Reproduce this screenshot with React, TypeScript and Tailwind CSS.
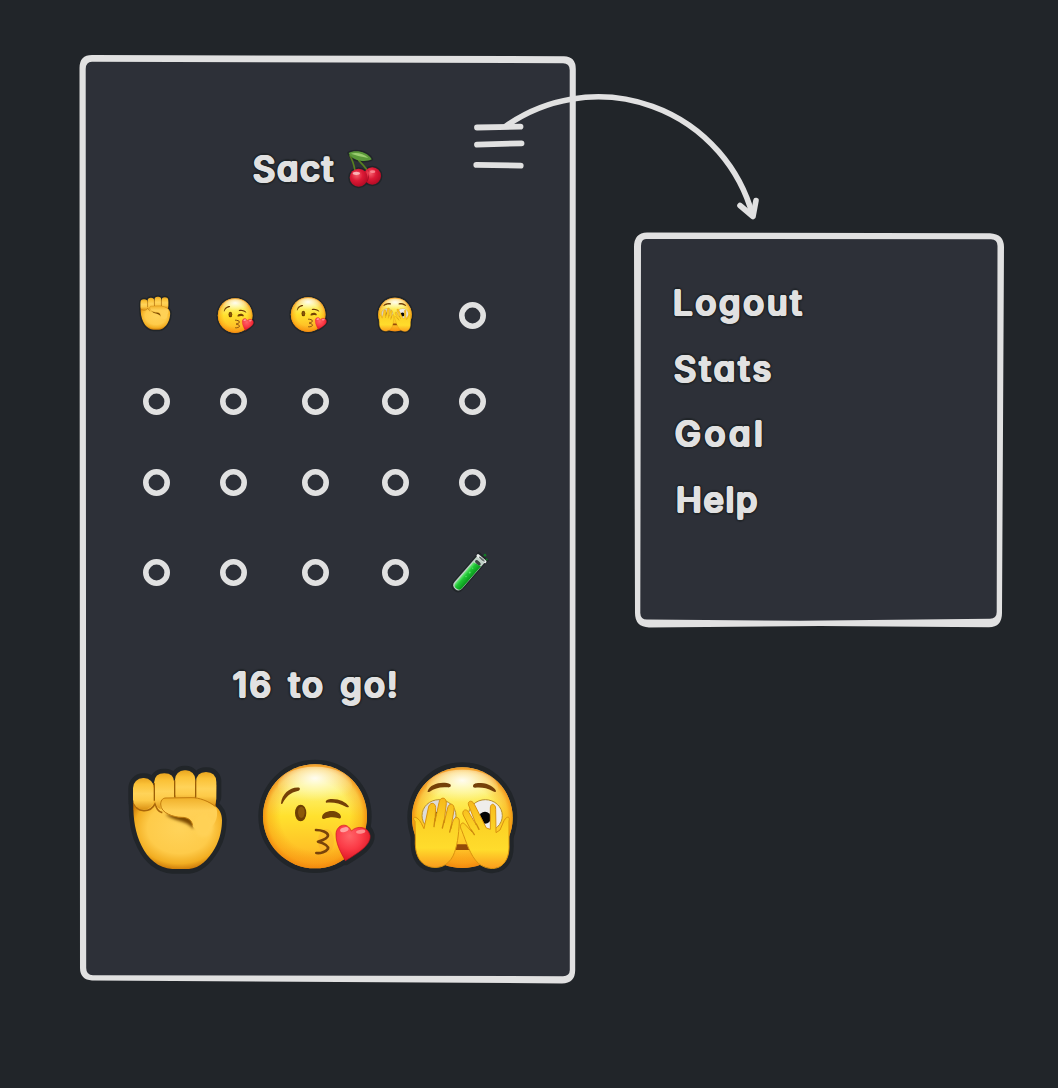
import React from "react";

const HALO = "#212529";
const CHALK = "#e1e1e1";

type SvgProps = { className?: string };

function Label({ children, className = "" }: { children: React.ReactNode; className?: string }) {
  return (
    <span
      className={
        "block whitespace-nowrap font-['Inter',sans-serif] text-[34.5px] leading-10 font-normal text-[#e1e1e1] [font-feature-settings:'cv11'] [text-shadow:1.4px_0_0_#e1e1e1,-1.4px_0_0_#e1e1e1,0_1.4px_0_#e1e1e1,0_-1.4px_0_#e1e1e1,1px_1px_0_#e1e1e1,-1px_1px_0_#e1e1e1,1px_-1px_0_#e1e1e1,-1px_-1px_0_#e1e1e1,3px_0_1px_#212529,-3px_0_1px_#212529,0_3px_1px_#212529,0_-3px_1px_#212529,2px_2px_1px_#212529,-2px_2px_1px_#212529,2px_-2px_1px_#212529,-2px_-2px_1px_#212529] " +
        className
      }
    >
      {children}
    </span>
  );
}

function Ring() {
  return (
    <svg className="size-[27px]" viewBox="0 0 27 27" fill="none">
      <circle cx="13.5" cy="13.5" r="10.7" stroke={CHALK} strokeWidth="5.6" />
    </svg>
  );
}

function Fist({ className }: SvgProps) {
  const palm =
    "M55 160 C54 205 61 252 80 288 C98 325 130 355 172 357 L222 357 C255 355 280 328 300 294 C316 266 321 235 321 210 C321 190 312 176 298 166 L240 146 L140 150 Z";
  return (
    <svg className={className} viewBox="0 0 405 405">
      <defs>
        <radialGradient id="palm" cx="0.52" cy="0.42" r="0.6">
          <stop offset="0" stopColor="#ffd35a" />
          <stop offset="0.6" stopColor="#fecb4a" />
          <stop offset="0.84" stopColor="#f2ae22" />
          <stop offset="1" stopColor="#c87406" />
        </radialGradient>
        <linearGradient id="finger" x1="0" x2="0" y1="0" y2="1">
          <stop offset="0" stopColor="#e9a51f" />
          <stop offset="0.2" stopColor="#fbc238" />
          <stop offset="0.5" stopColor="#ffd359" />
          <stop offset="0.72" stopColor="#fdca48" />
          <stop offset="1" stopColor="#dd9416" />
        </linearGradient>
        <linearGradient id="thumb" x1="0" x2="0" y1="0" y2="1">
          <stop offset="0" stopColor="#f0b02a" />
          <stop offset="0.4" stopColor="#ffd056" />
          <stop offset="1" stopColor="#ffcf52" />
        </linearGradient>
        <filter id="soft"><feGaussianBlur stdDeviation="4" /></filter>
      </defs>
      <g fill={HALO} stroke={HALO} strokeWidth="28" strokeLinejoin="round">
        <path d={palm} />
        <rect x="54" y="84" width="64" height="96" rx="30" />
        <rect x="117" y="70" width="62" height="100" rx="28" />
        <rect x="180" y="61" width="60" height="100" rx="28" />
        <rect x="243" y="66" width="62" height="100" rx="28" />
      </g>
      <path d="M56 118 L118 104 L180 95 L243 95 L304 104 L302 180 L56 180 Z" fill="#b96f05" />
      <path d={palm} fill="url(#palm)" />
      <path d="M57 156 C64 190 106 190 121 160 C124 180 132 186 142 188" fill="none" stroke="#a9660a" strokeWidth="5" />
      <rect x="180" y="61" width="61" height="100" rx="28" fill="url(#finger)" />
      <path d="M117 98 Q119 70 148 70 Q177 70 178 98 V150 H142 Q134 156 137 178 Q122 172 119 150 Z" fill="url(#finger)" />
      <path d="M243 96 Q244 66 273 66 Q303 66 304 96 V146 Q303 160 298 167 L243 146 Z" fill="url(#finger)" />
      <rect x="54" y="84" width="63" height="94" rx="30" fill="url(#finger)" />
      <g fill="none" stroke="#9c5f06" strokeWidth="4" strokeLinecap="round">
        <path d="M118 100 V150" />
        <path d="M179 92 V140" />
        <path d="M242 92 V142" />
      </g>
      <path d="M152 192 C175 216 214 208 236 238 C240 218 228 198 200 196 Z" fill="#7a4a06" filter="url(#soft)" />
      <path d="M153 144 L228 143 C252 142 286 156 304 174 C312 200 300 236 266 240 C246 242 234 236 233 226 C230 208 216 202 200 202 C178 202 136 190 137 162 C138 148 145 144 153 144 Z" fill="url(#thumb)" />
      <path d="M233 226 C230 208 216 202 200 202 C178 202 136 190 137 162 C138 148 145 144 153 144 L228 143 C252 142 282 154 302 170" fill="none" stroke="#c27c0d" strokeWidth="3" />
      <ellipse cx="266" cy="228" rx="28" ry="34" fill="#ffd157" filter="url(#soft)" />
    </svg>
  );
}

function FaceGradient({ id }: { id: string }) {
  return (
    <>
      <linearGradient id={id} x1="0" x2="0" y1="0" y2="1">
        <stop offset="0" stopColor="#fdf08a" />
        <stop offset="0.25" stopColor="#fdf170" />
        <stop offset="0.5" stopColor="#ffe12e" />
        <stop offset="0.8" stopColor="#ffc327" />
        <stop offset="1" stopColor="#fba01b" />
      </linearGradient>
      <radialGradient id={id + "-rim"} cx="0.5" cy="0.5" r="0.5">
        <stop offset="0.66" stopColor="#f68c0b" stopOpacity="0" />
        <stop offset="0.9" stopColor="#f68c0b" stopOpacity="0.4" />
        <stop offset="1" stopColor="#f0850c" stopOpacity="0.85" />
      </radialGradient>
      <radialGradient id={id + "-shine"} cx="0.5" cy="0.3" r="0.6">
        <stop offset="0" stopColor="#ffffff" stopOpacity="0.9" />
        <stop offset="1" stopColor="#ffffd0" stopOpacity="0" />
      </radialGradient>
    </>
  );
}

function Kiss({ className }: SvgProps) {
  const heart =
    "M286 332 C274 310 257 282 258 252 C259 224 292 214 304 243 C320 226 354 228 360 256 C363 284 330 306 286 332 Z";
  return (
    <svg className={className} viewBox="0 0 435 405">
      <defs>
        <FaceGradient id="kiss" />
        <radialGradient id="heart" cx="0.4" cy="0.3" r="0.75">
          <stop offset="0" stopColor="#ff6468" />
          <stop offset="0.5" stopColor="#fb3a46" />
          <stop offset="1" stopColor="#d9111f" />
        </radialGradient>
      </defs>
      <g fill={HALO} stroke={HALO} strokeWidth="28" strokeLinejoin="round">
        <circle cx="195" cy="199" r="156" />
        <path d={heart} />
      </g>
      <circle cx="195" cy="199" r="156" fill="url(#kiss)" />
      <circle cx="195" cy="199" r="156" fill="url(#kiss-rim)" />
      <ellipse cx="195" cy="108" rx="112" ry="58" fill="url(#kiss-shine)" />
      <path d="M93 160 C96 132 120 110 148 113 C152 117 148 122 143 123 C122 127 109 139 97 161 C95 163 93 162 93 160 Z" fill="#744008" />
      <path d="M228 158 C225 151 234 147 246 147 C269 147 288 157 296 168 C298 172 294 173 289 171 C268 159 250 156 228 158 Z" fill="#744008" />
      <ellipse cx="152" cy="189" rx="17" ry="25" fill="#6d3f04" />
      <ellipse cx="154" cy="187" rx="10" ry="17" fill="#8b5909" />
      <path d="M216 202 C218 178 268 177 273 200 C273 206 268 206 263 204 C250 200 238 201 224 206 C219 208 216 206 216 202 Z" fill="#744305" />
      <ellipse cx="228" cy="273" rx="24" ry="36" fill="#f68c35" opacity="0.2" />
      <path d="M198 240 C216 240 232 247 234 256 C235 264 220 270 204 275 C222 280 236 287 234 296 C228 305 212 311 199 309" fill="none" stroke="#79430a" strokeWidth="8" strokeLinecap="round" strokeLinejoin="round" />
      <path d={heart} fill="url(#heart)" stroke="#cf1220" strokeWidth="2" />
      <ellipse cx="283" cy="239" rx="13" ry="7" fill="#ffb6b4" opacity="0.8" transform="rotate(-14 283 239)" />
      <ellipse cx="332" cy="245" rx="14" ry="6" fill="#ffaaa6" opacity="0.75" transform="rotate(-8 332 245)" />
    </svg>
  );
}

function Peek({ className }: SvgProps) {
  const left =
    "M60 214 C52 206 56 198 66 204 C78 212 82 228 87 236 L100 174 C102 157 121 154 122 173 L120 214 L132 158 C134 140 155 139 154 160 L147 219 L158 174 C162 156 180 160 177 180 L167 237 L174 213 C179 198 194 199 193 216 C191 255 187 290 174 318 C158 348 133 356 107 351 C69 343 59 306 61 268 Z";
  const right =
    "M342 213 C346 200 336 196 327 212 L315 240 L303 248 L302 178 C303 160 286 157 286 174 L286 238 L274 234 L238 163 C230 146 213 154 223 171 L244 225 L222 188 C213 171 197 183 206 198 L231 246 L211 224 C201 211 191 226 200 241 C214 276 225 316 250 340 C271 357 298 360 316 349 C340 333 343 305 342 282 Z";
  return (
    <svg className={className} viewBox="0 0 420 405">
      <defs>
        <FaceGradient id="peek" />
        <linearGradient id="hand" x1="0" x2="0" y1="0" y2="1">
          <stop offset="0" stopColor="#f7b91b" />
          <stop offset="0.4" stopColor="#fcd326" />
          <stop offset="0.72" stopColor="#ffdc2c" />
          <stop offset="1" stopColor="#fb9d1d" />
        </linearGradient>
      </defs>
      <g fill={HALO} stroke={HALO} strokeWidth="28" strokeLinejoin="round">
        <circle cx="202" cy="202" r="151" />
        <path d={left} />
        <path d={right} />
      </g>
      <circle cx="202" cy="203" r="151" fill="url(#peek)" />
      <circle cx="202" cy="203" r="151" fill="url(#peek-rim)" />
      <ellipse cx="202" cy="113" rx="108" ry="54" fill="url(#peek-shine)" />
      <path d="M98 123 C105 102 143 92 166 103 C170 109 166 113 158 112 C134 110 119 115 104 125 C99 127 97 126 98 123 Z" fill="#744008" />
      <path d="M234 108 C235 99 247 98 258 99 C280 100 299 112 303 123 C303 127 299 126 294 124 C275 113 258 111 240 113 C236 113 234 111 234 108 Z" fill="#744008" />
      <ellipse cx="132" cy="197" rx="51" ry="48" fill="#dddcda" stroke="#b88f2d" strokeWidth="3" />
      <ellipse cx="271" cy="197" rx="51" ry="48" fill="#efedeb" stroke="#b88f2d" strokeWidth="3" />
      <circle cx="127" cy="202" r="17" fill="#17130c" />
      <circle cx="270" cy="203" r="18" fill="#050505" />
      <path d="M178 283 L226 283 L234 300 L178 300 Z" fill="#944b08" />
      <g fill="url(#hand)" stroke="#d9930f" strokeWidth="3" strokeLinejoin="round">
        <path d={left} />
        <path d={right} />
      </g>
      <g fill="none" stroke="#cd8b0e" strokeWidth="4" strokeLinecap="round">
        <path d="M120 205 L117 230" />
        <path d="M148 210 L142 234" />
        <path d="M170 224 L164 246" />
        <path d="M244 222 L252 238" />
        <path d="M229 240 L238 254" />
      </g>
    </svg>
  );
}

function Cherries({ className }: SvgProps) {
  return (
    <svg className={className} viewBox="340 110 126 130">
      <defs>
        <radialGradient id="cherry" cx="0.4" cy="0.35" r="0.65">
          <stop offset="0" stopColor="#f5606c" />
          <stop offset="0.5" stopColor="#dc1935" />
          <stop offset="1" stopColor="#b50c26" />
        </radialGradient>
      </defs>
      <g fill={HALO} stroke={HALO} strokeWidth="9" strokeLinejoin="round">
        <circle cx="387" cy="202" r="27" />
        <circle cx="428" cy="197" r="26" />
        <path d="M357 128 C374 118 412 122 426 147 C410 157 366 153 357 128 Z" />
      </g>
      <path d="M361 136 Q371 154 376 181 M387 150 Q403 166 414 181" fill="none" stroke="#58801f" strokeWidth="5" strokeLinecap="round" />
      <path d="M357 128 C374 118 412 122 426 147 C410 157 366 153 357 128 Z" fill="#5b9939" />
      <path d="M364 130 C380 125 402 130 416 143 Q391 140 364 130 Z" fill="#9bcc70" />
      <circle cx="428" cy="197" r="26" fill="url(#cherry)" />
      <circle cx="387" cy="202" r="27" fill="url(#cherry)" />
      <path d="M413 176 Q421 184 415 202 Q412 212 410 218 Q425 198 413 176 Z" fill="#9b0b20" />
      <ellipse cx="380" cy="189" rx="11" ry="5" fill="#ffc6c7" opacity="0.85" />
      <ellipse cx="429" cy="184" rx="8" ry="4" fill="#ff9ca1" opacity="0.75" />
    </svg>
  );
}

function TestTube({ className }: SvgProps) {
  return (
    <svg className={className} viewBox="0 0 240 180">
      <defs>
        <linearGradient id="liquid" x1="0" x2="1" y1="0" y2="0">
          <stop offset="0" stopColor="#6fe87c" />
          <stop offset="0.35" stopColor="#1fc634" />
          <stop offset="1" stopColor="#08971b" />
        </linearGradient>
      </defs>
      <g transform="translate(-2 0) rotate(41 118 100)">
        <path d="M102 36 L136 36 L134 47 V151 Q134 165 119 165 Q104 165 104 151 V47 Z" fill={HALO} stroke={HALO} strokeWidth="8" />
        <path d="M104 42 H134 V148 Q134 163 119 163 Q104 163 104 148 Z" fill="#bfd0c6" />
        <path d="M108 67 L133 61 V148 Q133 160 120 160 Q108 160 108 148 Z" fill="url(#liquid)" />
        <ellipse cx="119" cy="59" rx="10" ry="5" fill="#3a4541" />
        <rect x="101" y="38" width="36" height="9" rx="4" fill="#eceeee" />
        <ellipse cx="121" cy="43" rx="11" ry="3" fill="#65706b" />
      </g>
      <g fill="#56e765">
        <circle cx="119" cy="99" r="3" />
        <circle cx="108" cy="111" r="2" />
        <circle cx="128" cy="86" r="2" />
      </g>
      <circle cx="165" cy="47" r="4" fill="#117a25" />
      <circle cx="170" cy="60" r="3" fill="#117a25" />
    </svg>
  );
}

function MenuIcon() {
  return (
    <svg className="h-[48px] w-[54px]" viewBox="472 122 54 48" fill="none" stroke={CHALK} strokeWidth="5.8" strokeLinecap="round">
      <path d="M477 127.5 L520.5 126.6" />
      <path d="M477 144.6 L521.5 143.3" />
      <path d="M476.3 164.9 L520.7 165.6" />
    </svg>
  );
}

function Tracker() {
  const small = "h-[45px] shrink-0";
  return (
    <div className="ml-[40px] grid w-[393px] grid-cols-[75px_78px_86px_74px_80px] grid-rows-[86px_87px_75px_104px] place-items-center">
      <Fist className={small + " w-[45px] translate-x-[0.5px] -translate-y-[3px]"} />
      <Kiss className={small + " w-[48.3px] translate-x-[4.5px] translate-y-[0.5px]"} />
      <Kiss className={small + " w-[48.3px] -translate-x-[4.5px] -translate-y-[0.5px]"} />
      <Peek className={small + " w-[46.7px] translate-x-[0.5px] -translate-y-[1px]"} />
      <Ring />
      {Array.from({ length: 14 }, (_, i) => (
        <Ring key={i} />
      ))}
      <TestTube className="h-[60px] w-[80px] -translate-x-[2px] -translate-y-[2.5px]" />
    </div>
  );
}

function Phone() {
  return (
    <section className="absolute top-[54px] left-[79px] h-[930px] w-[497px]">
      <svg className="absolute inset-0 size-full" viewBox="79 54 497 930">
        <path
          d="M92 58 L563 59 Q573 59 573 69 L572.5 970 Q572.5 980 562 980 L93 978.5 Q83 978 83 968 L82.5 69 Q82 58 92 58 Z"
          fill="#2d3038"
        />
        <path
          fillRule="evenodd"
          fill={CHALK}
          d="M92 55 L564 56.2 Q575.8 56.5 575.8 69 L575.2 970 Q575.2 983.4 562 983.4 L92 980.4 Q80.2 980 80 968 L79.5 68 Q79.5 55 92 55 Z M92 61.8 Q85.7 62 85.7 69 L86.2 968 Q86.2 975 93 975.2 L563 976.2 Q569.7 976 569.8 970 L569.7 70 Q569.7 63.3 563 63.2 Z"
        />
      </svg>
      <div className="relative flex h-full flex-col">
        <header className="flex h-[218px] pt-[68px] pl-[174px]">
          <Label className="mt-[27px] w-[90px] tracking-[2px]">Sact</Label>
          <Cherries className="mt-[25px] h-[43.3px] w-[42px]" />
          <div className="ml-[87px]">
            <MenuIcon />
          </div>
        </header>
        <Tracker />
        <Label className="mt-[41px] ml-[154px] tracking-[2.5px] [word-spacing:3px]">16 to go!</Label>
        <div className="mt-[45px] ml-[36px] flex">
          <Fist className="h-[135px] w-[135px]" />
          <Kiss className="h-[135px] w-[145px]" />
          <Peek className="h-[135px] w-[140px]" />
        </div>
      </div>
    </section>
  );
}

function MenuPanel() {
  return (
    <section className="absolute top-[232px] left-[634px] h-[396px] w-[371px]">
      <svg className="absolute inset-0 size-full" viewBox="634 232 371 396">
        <path d="M646 236 H991 Q1001 236 1001 246 L999 613 Q999 623 989 623 H648 Q638 623 638 613 L637 246 Q637 236 646 236 Z" fill="#2d3038" />
        <path
          fillRule="evenodd"
          fill={CHALK}
          d="M647 232.6 L990 233.2 Q1004 234 1004 247 L1002 613 Q1002 627 989 627.3 L820 626 L649 627.4 Q635 627 635 613 L634 247 Q634 233 647 232.6 Z M646 239 Q641.2 239 641 246 L640.3 613 Q640.5 619.6 647 619.6 L800 620.8 L990 618.8 Q996.7 618.5 996.7 612 L997.5 246 Q997.5 239.3 991 239.2 Z"
        />
      </svg>
      <nav className="relative flex flex-col gap-[25.7px] pt-[51px] pl-[38px]">
        <Label className="pl-px tracking-[3px]">Logout</Label>
        <Label className="pl-[2px] tracking-[3.4px]">Stats</Label>
        <Label className="pl-[3px] tracking-[3.9px]">Goal</Label>
        <Label className="pl-[4px] tracking-[2px]">Help</Label>
      </nav>
    </section>
  );
}

export default function App() {
  return (
    <main className="relative h-[1088px] w-[1058px] overflow-hidden bg-[#212529]">
      <Phone />
      <MenuPanel />
      <svg
        className="absolute top-[90px] left-[500px] h-[135px] w-[265px]"
        viewBox="500 90 265 135"
        fill="none"
        stroke={CHALK}
        strokeWidth="5.6"
        strokeLinecap="round"
        strokeLinejoin="round"
      >
        <path d="M506 126 A160 160 0 0 1 752.5 215" />
        <path d="M740 205.5 L753 216.5 L756 200.5" />
      </svg>
    </main>
  );
}
